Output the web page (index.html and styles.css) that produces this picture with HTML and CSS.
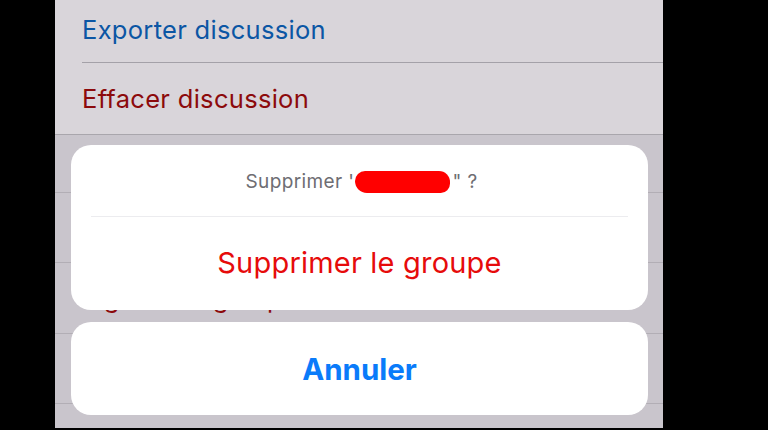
FILE: index.html
```html
<!DOCTYPE html>
<html lang="fr">
<head>
    <meta charset="UTF-8">
    <meta name="viewport" content="width=device-width, initial-scale=1.0">
    <title>Supprimer le groupe</title>
    <link rel="stylesheet" href="styles.css">
</head>
<body>
    <div class="screen">
        <!-- Menu de la discussion -->
        <div class="menu">
            <div class="menu-item export">Exporter discussion</div>
            <div class="menu-item clear">Effacer discussion</div>
        </div>

        <!-- Lignes derriere la feuille d'actions -->
        <div class="rows">
            <div class="row"></div>
            <div class="row"></div>
            <div class="row danger">Signaler le groupe</div>
            <div class="row"></div>
        </div>

        <!-- Feuille d'actions -->
        <div class="sheet">
            <div class="card">
                <div class="sheet-title">
                    Supprimer '<span class="hidden-name"></span>" ?
                </div>
                <div class="sheet-button destructive">Supprimer le groupe</div>
            </div>
            <div class="card">
                <div class="sheet-button cancel">Annuler</div>
            </div>
        </div>
    </div>
</body>
</html>
```

FILE: styles.css
```css
/* Ecran iOS avec feuille d'actions */
html, body {
    margin: 0;
    padding: 0;
    background: #000;
    width: 768px;
    height: 430px;
    overflow: hidden;
    font-family: Inter, "Noto Sans", sans-serif;
}

.screen {
    position: relative;
    width: 608px;
    height: 428px;
    margin-left: 55px;
    background: #c9c5cc;
    overflow: hidden;
}

/* Menu du haut */
.menu {
    background: #d9d5da;
    border-bottom: 1px solid #a9a6ac;
}

.menu-item {
    margin-left: 27px;
    display: flex;
    align-items: center;
    font-size: 25.5px;
    letter-spacing: 0.3px;
    box-sizing: border-box;
}

.menu-item.export {
    height: 63px;
    color: #0b56a4;
    border-bottom: 1px solid #a4a1a8;
    padding-bottom: 4px;
}

.menu-item.clear {
    height: 71px;
    color: #8c0a0c;
}

/* Lignes du tableau en dessous */
.rows {
    display: flex;
    flex-direction: column;
}

.row {
    height: 70px;
    border-bottom: 1px solid #b2aeb5;
    box-sizing: border-box;
    padding-left: 27px;
    font-size: 25px;
    color: #8c0a0c;
    display: flex;
    align-items: center;
}

.row:first-child {
    height: 58px;
}

.row.danger {
    height: 71px;
    padding-top: 2px;
}

/* Feuille d'actions */
.sheet {
    position: absolute;
    left: 16px;
    top: 145px;
    width: 577px;
    display: flex;
    flex-direction: column;
    gap: 12px;
}

.card {
    background: #fff;
    border-radius: 20px;
    overflow: hidden;
}

.sheet-title {
    height: 72px;
    display: flex;
    align-items: center;
    justify-content: center;
    font-size: 19px;
    letter-spacing: 0.4px;
    color: #6e6d72;
    border-bottom: 1px solid #ececef;
    margin: 0 20px;
    padding-left: 4px;
    padding-top: 2px;
    box-sizing: border-box;
}

.hidden-name {
    display: inline-block;
    width: 95px;
    height: 22px;
    background: #ff0000;
    border-radius: 11px 12px 10px 13px;
    margin: 0 2px 0 1px;
    vertical-align: middle;
}

.sheet-button {
    height: 93px;
    display: flex;
    align-items: center;
    justify-content: center;
}

.destructive {
    color: #e60b0b;
    font-size: 29px;
    letter-spacing: 0.2px;
    padding-bottom: 2px;
    box-sizing: border-box;
}

.cancel {
    color: #0a7bfa;
    font-weight: 700;
    font-size: 29.5px;
}
```
